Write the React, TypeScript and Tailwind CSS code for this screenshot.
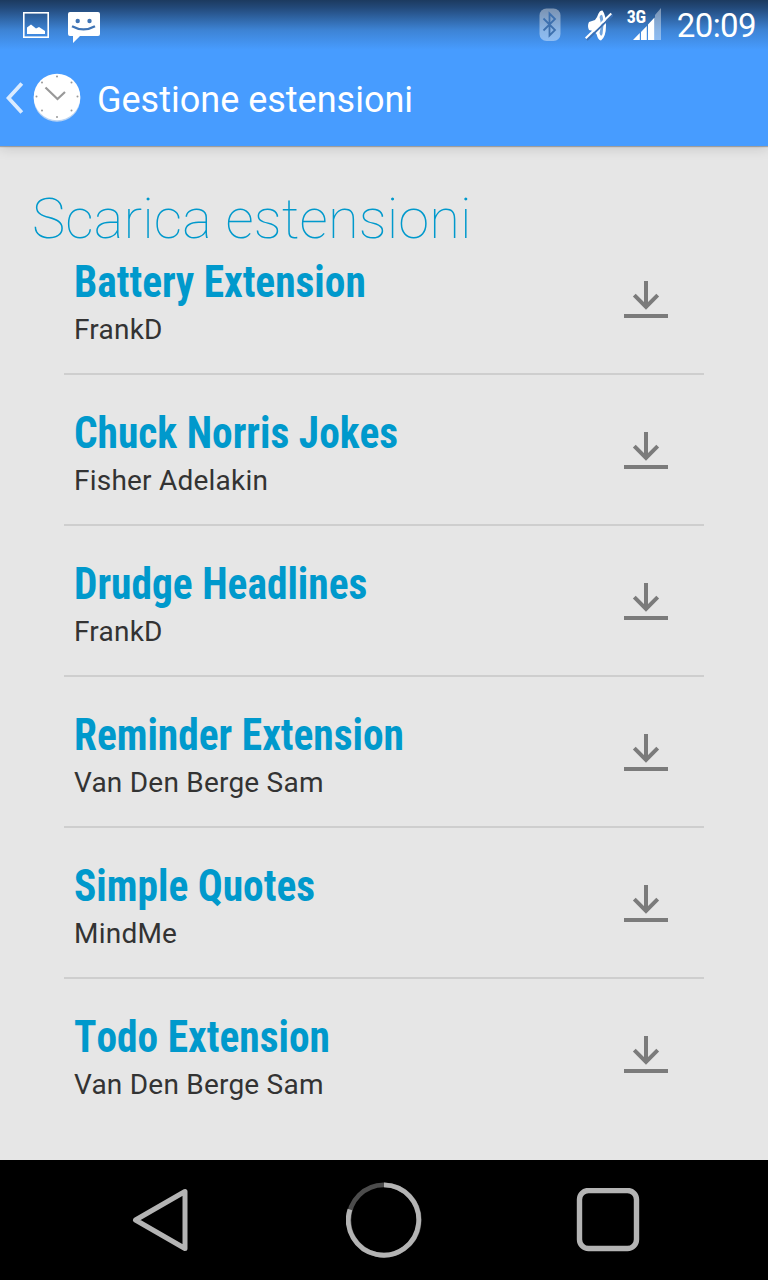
interface Extension {
  name: string;
  author: string;
}

const extensions: Extension[] = [
  { name: 'Battery Extension', author: 'FrankD' },
  { name: 'Chuck Norris Jokes', author: 'Fisher Adelakin' },
  { name: 'Drudge Headlines', author: 'FrankD' },
  { name: 'Reminder Extension', author: 'Van Den Berge Sam' },
  { name: 'Simple Quotes', author: 'MindMe' },
  { name: 'Todo Extension', author: 'Van Den Berge Sam' },
];

// Hour dots, clockwise from 12
const dots = [
  [24, 3.5], [38.5, 9.5], [44.5, 23.5], [38.5, 37.5],
  [24, 44], [9, 37.5], [3.5, 23.5], [9, 9.5],
];

function StatusBar() {
  return (
    <div className="flex h-[50px] items-start">
      <svg className="ml-[23px] mt-3 h-[26px] w-[26px]" viewBox="0 0 26 26">
        <rect x="0.8" y="0.8" width="24.4" height="24.4" fill="none" stroke="#fff" strokeWidth="1.6" />
        <path d="M4 22V15.5L8 12.5L13 16.5L16 15L22 19V22Z" fill="#fff" />
      </svg>
      <svg className="ml-[18px] mt-3 h-[31px] w-[34px]" viewBox="0 0 34 31">
        <path d="M3 0H31Q33 0 33 2V22Q33 24 31 24H13L6 31V24H3Q1 24 1 22V2Q1 0 3 0Z" fill="#fff" />
        <circle cx="10.7" cy="9" r="2.2" fill="#3f74b5" />
        <circle cx="22.5" cy="9" r="2.2" fill="#3f74b5" />
        <path d="M5 14.2Q16.5 20.5 28 14.2" fill="none" stroke="#3f74b5" strokeWidth="2.2" />
      </svg>
      <svg className="ml-auto mt-2 h-[34px] w-[22px]" viewBox="0 0 22 34">
        <rect x="0.5" y="0.5" width="21" height="32.5" rx="7" fill="#fff" fillOpacity="0.4" />
        <path d="M4.5 10.5L16 22L10.5 27.5V5.5L16 11L4.5 22.5" fill="none" stroke="#3d70ae" strokeWidth="1.8" />
      </svg>
      <svg className="ml-[24px] mt-2.5 h-8 w-7" viewBox="0 0 28 32">
        <path d="M4 12L10 10Q12 8 13.5 3.5Q15 0 17.5 0.5Q21 5 21 15.5Q21 27 16 30.5Q13 30 11.5 24L8 21L4 20Q2 16 4 12Z" fill="#fff" />
        <path d="M14.5 7Q17 2 18 8Q19 15.5 17.5 24Q16 28 14.5 23Q17 15 14.5 7Z" fill="#6fa3dd" />
        <path d="M2 30L28 5" stroke="#3d70b3" strokeWidth="1.8" />
        <path d="M0.7 28.2L26.3 3.5" stroke="#fff" strokeWidth="2" />
      </svg>
      <div className="relative ml-[15px] mt-2 h-8 w-[34px]">
        <span className="absolute -left-px top-0 font-['Roboto_Condensed',Roboto,sans-serif] text-[18px] font-bold leading-[17px] tracking-[-0.5px] [font-stretch:75%]">3G</span>
        <svg className="h-8 w-[34px]" viewBox="0 0 34 32">
          <path d="M27 7L33 0V32H27Z" fill="#fff" fillOpacity="0.4" />
          <path d="M5 32L11.8 25V32ZM13 24L18.8 18V32H13ZM20 16.5L26.5 9.5V32H20Z" fill="#fff" />
        </svg>
      </div>
      <span className="ml-[15px] mr-3 mt-[9px] text-[33px] leading-[34px] tracking-[-0.6px]">20:09</span>
    </div>
  );
}

function ActionBar() {
  return (
    <div className="flex h-[95px] items-center">
      <svg className="ml-1.5 h-8 w-[18px]" viewBox="0 0 18 32">
        <path d="M15.8 1.5L2.5 16L15.8 30.5" fill="none" stroke="#fff" strokeOpacity="0.8" strokeWidth="3.8" />
      </svg>
      <svg className="ml-[9px] h-[50px] w-12" viewBox="0 0 48 50">
        <circle cx="24" cy="25.5" r="23.3" fill="#b9d3f2" />
        <circle cx="24" cy="24" r="23.3" fill="#fff" />
        {dots.map(([x, y], i) => (
          <circle key={i} cx={x} cy={y} r="1" fill="#999" />
        ))}
        <path d="M12.5 14.5L24.5 26L32 19" fill="none" stroke="#999" strokeWidth="2.2" />
      </svg>
      <h1 className="ml-4 mt-1 text-[36px] leading-[44px]">Gestione estensioni</h1>
    </div>
  );
}

function DownloadIcon() {
  return (
    <svg className="mt-px h-[37px] w-11" viewBox="0 0 44 37">
      <path d="M22 0V27" fill="none" stroke="#7b7b7b" strokeWidth="4" />
      <path d="M10.3 14.2L22 26L33.7 14.2" fill="none" stroke="#7b7b7b" strokeWidth="4" />
      <rect y="33" width="44" height="4" fill="#7b7b7b" />
    </svg>
  );
}

function NavigationBar() {
  return (
    <nav className="flex h-[120px] items-center justify-between bg-black px-[130px]">
      <svg className="h-16 w-[60px]" viewBox="0 0 60 64">
        <path d="M5.5 32L55 3.5V60.5Z" fill="none" stroke="#b4b4b4" strokeWidth="5" strokeLinejoin="round" />
      </svg>
      <svg className="ml-[2px] h-[76px] w-[76px]" viewBox="0 0 76 76">
        <circle cx="38" cy="38" r="35.2" fill="none" stroke="#4c4c4c" strokeWidth="4.8" />
        <path d="M38 2.8A35.2 35.2 0 1 1 3.9 27.5" fill="none" stroke="#b4b4b4" strokeWidth="4.8" />
      </svg>
      <svg className="mr-[-2px] h-16 w-16" viewBox="0 0 64 64">
        <rect x="3.5" y="2.5" width="57" height="58" rx="9" fill="none" stroke="#b4b4b4" strokeWidth="5.4" />
      </svg>
    </nav>
  );
}

export default function App() {
  return (
    <div className="flex h-[1280px] w-[768px] flex-col overflow-hidden bg-[#e6e6e6] font-[Roboto,sans-serif]">
      <header className="h-[146px] shrink-0 bg-[#479cff] bg-[linear-gradient(to_bottom,#1c3a5f_0px,#234a7b_8px,#3d83d4_30px,#479cff_50px)] text-white shadow-[0_1px_1px_rgba(0,0,0,0.25),0_2px_12px_rgba(0,0,0,0.15)]">
        <StatusBar />
        <ActionBar />
      </header>

      <main className="flex-1 pt-[45px]">
        <h2 className="ml-8 text-[56px] font-[150] leading-[56px] tracking-[0.1px] text-[#0099cc]">Scarica estensioni</h2>
        <ul className="mx-16 -mt-[23px]">
          {extensions.map((ext, i) => (
            <li key={i} className="flex h-[151px] items-center justify-between border-b-2 border-[#cecece] pl-2.5 pr-9 last:border-transparent">
              <div className="mt-[7px]">
                <h3 className="mb-3 origin-left scale-x-[0.941] font-['Roboto_Condensed',Roboto,sans-serif] text-[44px] font-bold leading-[44px] text-[#0099cc] [font-kerning:none] [font-stretch:75%]">{ext.name}</h3>
                <p className="text-[28px] leading-[28px] tracking-[0.22px] text-[#333]">{ext.author}</p>
              </div>
              <DownloadIcon />
            </li>
          ))}
        </ul>
      </main>

      <NavigationBar />
    </div>
  );
}
